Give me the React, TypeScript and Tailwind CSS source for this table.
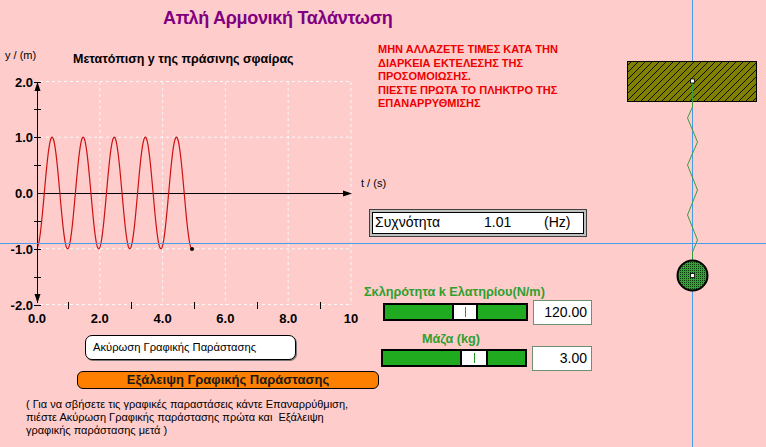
import React from "react";

const FONT = { fontFamily: '"Liberation Sans", Arial, sans-serif' };

// chart scale: t -> px, y -> px (page coordinates)
const X0 = 37;
const XS = 31.4;
const Y0 = 193;
const YS = 55.75;
const px = (t: number) => X0 + XS * t;
const py = (v: number) => Y0 - YS * v;

function curvePath() {
  const pts: string[] = [];
  for (let t = 0.03; t <= 4.94; t += 0.01) {
    const v = -Math.cos(2 * Math.PI * 1.01 * (t - 0.975));
    pts.push(`${px(t).toFixed(2)},${py(v).toFixed(2)}`);
  }
  return "M" + pts.join(" L");
}

function Graph() {
  const gridX = [2, 4, 6, 8, 10];
  const gridY = [2, 1, -1, -2];
  const yTicks = [2, 1.5, 1, 0.5, -0.5, -1, -1.5, -2];
  const xTicks = [1, 3, 5, 7, 9];
  const yLabels = ["2.0", "1.0", "0.0", "-1.0", "-2.0"];
  const xLabels = ["0.0", "2.0", "4.0", "6.0", "8.0", "10"];

  return (
    <svg
      width={364}
      height={288}
      viewBox="0 40 364 288"
      className="block overflow-visible"
      style={FONT}
    >
      <text x={5} y={59} fontSize={11} fill="#000">
        y / (m)
      </text>
      <text x={73} y={63} fontSize={12.5} fontWeight="bold" fill="#000">
        Μετατόπιση y της πράσινης σφαίρας
      </text>

      {/* grid */}
      {gridY.map((v) => (
        <line
          key={"gy" + v}
          x1={40}
          x2={351}
          y1={py(v)}
          y2={py(v)}
          stroke="#f8f8f8"
          strokeDasharray="3 3"
        />
      ))}
      {gridX.map((t) => (
        <line
          key={"gx" + t}
          x1={px(t)}
          x2={px(t)}
          y1={82}
          y2={305}
          stroke="#f8f8f8"
          strokeDasharray="3 3"
        />
      ))}

      {/* axes */}
      <line x1={37.5} x2={37.5} y1={82} y2={303} stroke="#000" />
      <polygon points="37.5,82 34.5,91 40.5,91" fill="#000" />
      <polygon points="37.5,303 34.5,294 40.5,294" fill="#000" />
      <line x1={37} x2={350} y1={193.5} y2={193.5} stroke="#000" />
      <polygon points="352,193.5 343,190.5 343,196.5" fill="#000" />
      {yTicks.map((v) => (
        <line
          key={"ty" + v}
          x1={34}
          x2={41}
          y1={Math.round(py(v)) + 0.5}
          y2={Math.round(py(v)) + 0.5}
          stroke="#000"
        />
      ))}
      {xTicks.map((t) => (
        <line
          key={"tx" + t}
          x1={Math.round(px(t)) + 0.5}
          x2={Math.round(px(t)) + 0.5}
          y1={302}
          y2={309}
          stroke="#000"
        />
      ))}

      {/* labels */}
      {yLabels.map((l, i) => (
        <text
          key={l}
          x={33}
          y={py(2 - i) + 5}
          fontSize={13}
          fontWeight="bold"
          textAnchor="end"
          fill="#000"
        >
          {l}
        </text>
      ))}
      {xLabels.map((l, i) => (
        <text
          key={"x" + l}
          x={px(i * 2)}
          y={323}
          fontSize={13}
          fontWeight="bold"
          textAnchor="middle"
          fill="#000"
        >
          {l}
        </text>
      ))}
      <text x={361} y={187} fontSize={11} fill="#000">
        t / (s)
      </text>

      {/* y(t) */}
      <path d={curvePath()} fill="none" stroke="#cc1111" strokeWidth={1.2} />
      <circle cx={192} cy={249} r={2} fill="#000" />
    </svg>
  );
}

function Slider({ width, thumbAt, thumbW }: { width: number; thumbAt: number; thumbW: number }) {
  return (
    <div
      className="flex h-[18px] border-2 border-black bg-[#1faa1f]"
      style={{ width }}
    >
      <div className="shrink-0" style={{ width: thumbAt }} />
      <div
        className="flex shrink-0 items-center justify-center border-x-2 border-black bg-white"
        style={{ width: thumbW }}
      >
        <div className="h-[10px] w-px bg-[#1f9a1f]" />
      </div>
    </div>
  );
}

function Spring() {
  const zig =
    "692.5,81 692.5,107 687.5,118 697.5,142 687.5,165 697.5,190 687.5,215 697.5,240 692.5,252 692.5,275";
  return (
    <svg width={166} height={447} viewBox="600 0 166 447" className="block shrink-0">
      <defs>
        <pattern id="hatch" width={7} height={7} patternUnits="userSpaceOnUse">
          <rect width={7} height={7} fill="#808000" />
          <line x1={0} y1={7} x2={7} y2={0} stroke="#000" strokeWidth={0.9} />
          <line x1={-1} y1={1} x2={1} y2={-1} stroke="#000" strokeWidth={0.9} />
          <line x1={6} y1={8} x2={8} y2={6} stroke="#000" strokeWidth={0.9} />
        </pattern>
        <pattern id="dots" width={2} height={2} patternUnits="userSpaceOnUse">
          <rect width={2} height={2} fill="#3aa03a" />
          <rect width={1} height={1} fill="#0a3a0a" />
        </pattern>
      </defs>
      <line x1={692.5} x2={692.5} y1={0} y2={447} stroke="#4a9be8" />
      <rect x={627.5} y={61.5} width={129} height={40} fill="url(#hatch)" stroke="#000" />
      <polyline points={zig} fill="none" stroke="#3c9c3c" strokeWidth={1} />
      <circle cx={692.5} cy={275.5} r={15} fill="url(#dots)" stroke="#000" strokeWidth={2} />
      <rect x={690.5} y={79} width={4} height={4} fill="#fff" stroke="#000" strokeWidth={0.8} />
      <rect x={690.5} y={273.5} width={4} height={4} fill="#fff" stroke="#000" strokeWidth={0.8} />
    </svg>
  );
}

export default function App() {
  return (
    <div
      className="relative flex h-[447px] w-[766px] overflow-hidden bg-[#ffcccc] text-black"
      style={FONT}
    >
      <div className="flex w-[600px] shrink-0 flex-col">
        {/* title */}
        <div className="h-[40px] pl-[163px] pt-[6px]">
          <h1 className="text-[18px] leading-[24px] font-bold tracking-[-0.3px] text-[#800080]">
            Απλή Αρμονική Ταλάντωση
          </h1>
        </div>

        <div className="flex">
          {/* graph + buttons */}
          <div className="flex w-[364px] shrink-0 flex-col">
            <Graph />
            <button className="ml-[85px] mt-[7px] flex h-[25px] w-[211px] items-center rounded-[7px] border border-black bg-white pl-[7px] text-[11.2px] shadow-[1px_1px_0_#777]">
              Ακύρωση Γραφικής Παράστασης
            </button>
            <button className="ml-[77px] mt-[11px] flex h-[18px] w-[302px] shrink-0 items-center justify-center rounded-[6px] border border-black bg-[#ff8000] text-[13px] font-bold text-[#1a1a1a]">
              Εξάλειψη Γραφικής Παράστασης
            </button>
            <p className="ml-[26px] mt-[9px] w-[360px] text-[11px] leading-[13px]">
              ( Για να σβήσετε τις γραφικές παραστάσεις κάντε Επαναρρύθμιση,
              <br />
              πιέστε Ακύρωση Γραφικής παράστασης πρώτα και &nbsp;Εξάλειψη
              <br />
              γραφικής παράστασης μετά )
            </p>
          </div>

          {/* controls */}
          <div className="flex w-[236px] shrink-0 flex-col">
            <p className="ml-[14px] mt-[3px] text-[11px] leading-[13.5px] font-bold text-[#ee0000]">
              ΜΗΝ ΑΛΛΑΖΕΤΕ ΤΙΜΕΣ ΚΑΤΑ ΤΗΝ
              <br />
              ΔΙΑΡΚΕΙΑ ΕΚΤΕΛΕΣΗΣ ΤΗΣ
              <br />
              ΠΡΟΣΟΜΟΙΩΣΗΣ.
              <br />
              ΠΙΕΣΤΕ ΠΡΩΤΑ ΤΟ ΠΛΗΚΤΡΟ ΤΗΣ
              <br />
              ΕΠΑΝΑΡΡΥΘΜΙΣΗΣ
            </p>

            <div className="ml-[5px] mt-[98px] h-[28px] w-[218px] border border-[#404040] bg-[#c0c0c0] p-[2px]">
              <div className="flex h-full items-center border border-black bg-white pl-[2px] text-[14px]">
                <span className="w-[109px] shrink-0">Συχνότητα</span>
                <span className="w-[60px] shrink-0">1.01</span>
                <span>(Hz)</span>
              </div>
            </div>

            <div className="mt-[47px] h-[16px] text-[12.7px] leading-[16px] font-bold text-[#2ea02e]">
              Σκληρότητα k Ελατηρίου(N/m)
            </div>
            <div className="flex h-[25px] items-center">
              <div className="ml-[19px]">
                <Slider width={145} thumbAt={67} thumbW={26} />
              </div>
              <div className="ml-[5px] flex h-[25px] w-[59px] items-center justify-end border border-[#6f8f6f] bg-white pr-[4px] text-[14px]">
                120.00
              </div>
            </div>

            <div className="ml-[58px] mt-[6px] h-[15px] text-[12.7px] leading-[16px] font-bold text-[#2ea02e]">
              Μάζα (kg)
            </div>
            <div className="flex h-[25px] items-center">
              <div className="ml-[17px]">
                <Slider width={146} thumbAt={77} thumbW={28} />
              </div>
              <div className="ml-[5px] flex h-[25px] w-[60px] items-center justify-end border border-[#6f8f6f] bg-white pr-[4px] text-[14px]">
                3.00
              </div>
            </div>
          </div>
        </div>
      </div>

      <Spring />

      {/* equilibrium line across the canvas */}
      <div className="pointer-events-none absolute left-0 top-[243px] h-px w-full bg-[#4a9be8]" />
    </div>
  );
}
